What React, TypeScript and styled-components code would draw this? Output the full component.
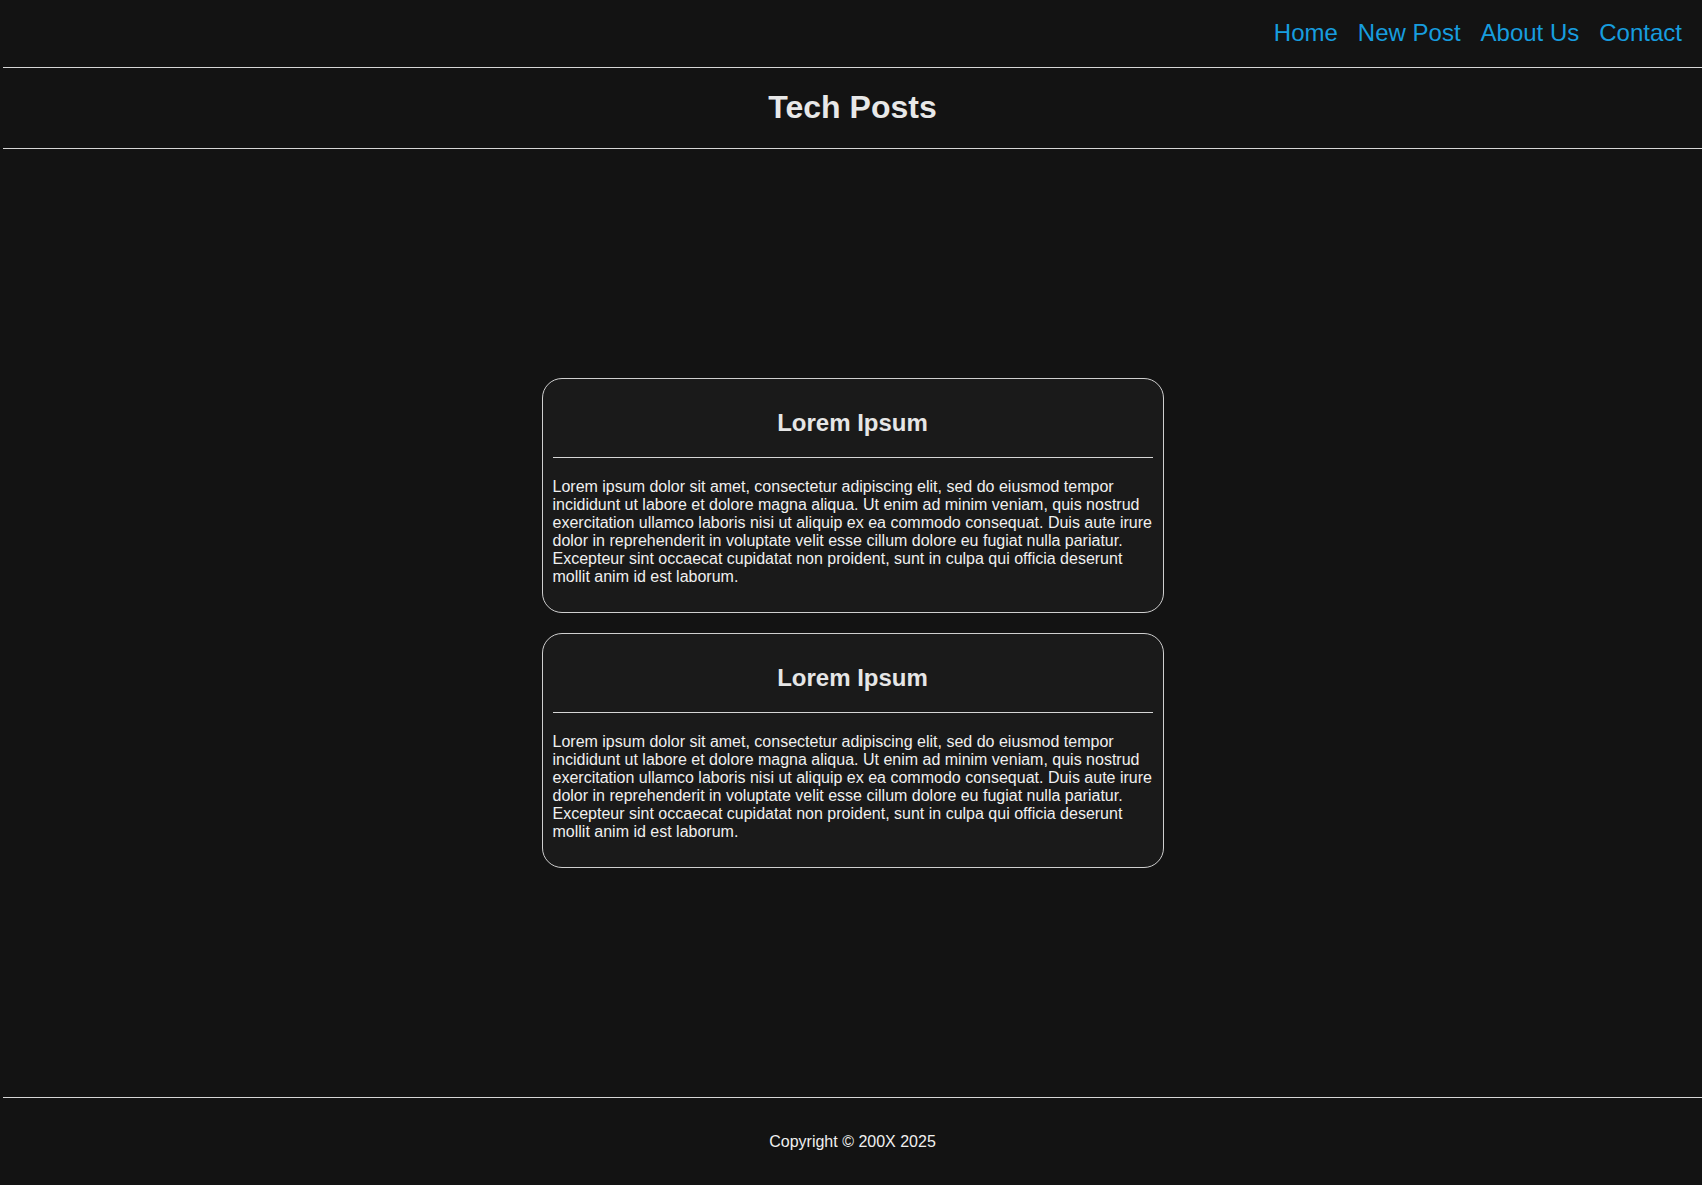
import React from "react";
import styled, { createGlobalStyle } from "styled-components";

const GlobalStyle = createGlobalStyle`
  html, body {
    margin: 0;
    padding: 0;
    background: #131313;
  }
  body {
    font-family: "Liberation Sans", Arial, Helvetica, sans-serif;
    color: #ececec;
  }
`;

const Page = styled.div`
  min-height: 100vh;
  display: flex;
  flex-direction: column;
  padding-left: 3px;
  box-sizing: border-box;
  background: #131313;
`;

const NavBar = styled.nav`
  display: flex;
  justify-content: flex-end;
  gap: 20px;
  padding: 19px 20px 20px 0;
  border-bottom: 1px solid #d6d6d6;
`;

const NavLink = styled.a`
  font-size: 24px;
  line-height: 28px;
  color: #179ddf;
  text-decoration: none;
  cursor: pointer;
`;

const Header = styled.header`
  border-bottom: 1px solid #d6d6d6;
`;

const Title = styled.h1`
  margin: 21px 0 22px;
  font-size: 32px;
  line-height: 37px;
  font-weight: 700;
  text-align: center;
  color: #e8e8e8;
`;

const Main = styled.main`
  flex: 1;
  display: flex;
  flex-direction: column;
  align-items: center;
  justify-content: center;
  gap: 20px;
`;

const Card = styled.article`
  width: 600px;
  padding: 10px;
  border: 1px solid #cfcfcf;
  border-radius: 20px;
  background: #1a1a1a;
`;

const CardTitle = styled.h2`
  margin: 20px 0;
  font-size: 24px;
  line-height: 28px;
  font-weight: 700;
  text-align: center;
  color: #e6e6e6;
`;

const Divider = styled.div`
  border-top: 1px solid #d6d6d6;
`;

const CardText = styled.p`
  margin: 20px 0 16px;
  font-size: 16px;
  line-height: 18px;
  color: #f0f0f0;
`;

const Footer = styled.footer`
  border-top: 1px solid #d6d6d6;
  padding: 35px 0 34px;
  text-align: center;
  font-size: 16px;
  line-height: 18px;
  color: #f0f0f0;
`;

const LOREM =
  "Lorem ipsum dolor sit amet, consectetur adipiscing elit, sed do eiusmod tempor incididunt ut labore et dolore magna aliqua. Ut enim ad minim veniam, quis nostrud exercitation ullamco laboris nisi ut aliquip ex ea commodo consequat. Duis aute irure dolor in reprehenderit in voluptate velit esse cillum dolore eu fugiat nulla pariatur. Excepteur sint occaecat cupidatat non proident, sunt in culpa qui officia deserunt mollit anim id est laborum.";

const posts = [
  { id: 1, title: "Lorem Ipsum", body: LOREM },
  { id: 2, title: "Lorem Ipsum", body: LOREM },
];

const links = ["Home", "New Post", "About Us", "Contact"];

export default function App() {
  return (
    <>
      <GlobalStyle />
      <Page>
        <NavBar>
          {links.map((l) => (
            <NavLink key={l}>{l}</NavLink>
          ))}
        </NavBar>
        <Header>
          <Title>Tech Posts</Title>
        </Header>
        <Main>
          {posts.map((p) => (
            <Card key={p.id}>
              <CardTitle>{p.title}</CardTitle>
              <Divider />
              <CardText>{p.body}</CardText>
            </Card>
          ))}
        </Main>
        <Footer>Copyright © 200X 2025</Footer>
      </Page>
    </>
  );
}
